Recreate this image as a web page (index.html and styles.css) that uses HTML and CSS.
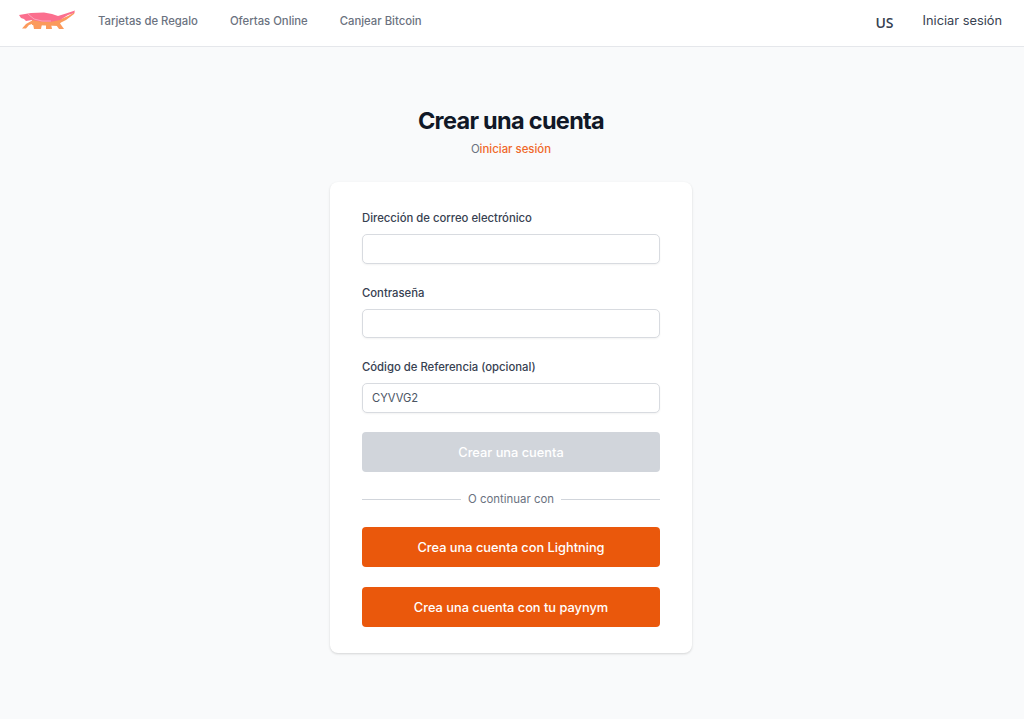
FILE: index.html
```html
<!DOCTYPE html>
<html lang="es">

<head>
    <meta charset="UTF-8">
    <meta name="viewport" content="width=device-width, initial-scale=1.0">
    <title>Crear una cuenta</title>
    <link rel="stylesheet" href="styles.css">
</head>

<body>
    <header class="topbar">
        <a class="logo" href="#">
            <svg width="58" height="22" viewBox="0 0 58 22">
                <path fill="#fb9a5c" d="M4 18.500L8 14L15 10L17 13L11 15L8 18.500Z"/>
                <path fill="#fb9a5c" d="M14 10L44 9L41 16L14 15Z"/>
                <path fill="#fb9a5c" d="M15 14L24 14L23 19L16 19Z"/>
                <path fill="#fb9a5c" d="M28 14L33 14L34 19L28 19Z"/>
                <path fill="#fb9a5c" d="M36 12L41 12L46 19L41 19Z"/>
                <path fill="#fb9a5c" d="M36 12L50 6L57 2L56 4L48 10L40 14Z"/>
                <path fill="#fb6f8e" d="M1 5L7 4L13 3L26 2.500L34 4L40 6L48 3.500L57 .5L56 3L50 5L42 10L32 12L22 11.500L14 10L8 11L6 9L3 8Z"/>
                <path fill="none" stroke="#fdb4c4" stroke-width=".8" d="M10 4L16 9L24 11L33 11"/>
            </svg>
        </a>
        <nav class="nav">
            <a href="#">Tarjetas de Regalo</a>
            <a href="#">Ofertas Online</a>
            <a href="#">Canjear Bitcoin</a>
        </nav>
        <div class="topbar-right">
            <span class="lang">US</span>
            <a class="login" href="#">Iniciar sesión</a>
        </div>
    </header>

    <main class="page">
        <h1>Crear una cuenta</h1>
        <p class="sub">O<a href="#">iniciar sesión</a></p>

        <form class="card" action="#">
            <div class="field">
                <label for="email">Dirección de correo electrónico</label>
                <input type="email" id="email">
            </div>
            <div class="field">
                <label for="pw">Contraseña</label>
                <input type="password" id="pw">
            </div>
            <div class="field field-last">
                <label for="ref">Código de Referencia (opcional)</label>
                <input type="text" id="ref" value="CYVVG2">
            </div>
            <button class="btn btn-off" type="button">Crear una cuenta</button>
            <div class="divider"><span>O continuar con</span></div>
            <button class="btn" type="button">Crea una cuenta con Lightning</button>
            <button class="btn" type="button">Crea una cuenta con tu paynym</button>
        </form>
    </main>
</body>

</html>
```

FILE: styles.css
```css
* {
    padding: 0;
    margin: 0;
    box-sizing: border-box;
}

body {
    background-color: #f9fafb;
    font-family: Inter, "Liberation Sans", sans-serif;
    color: #111827;
    height: 719px;
    overflow: hidden;
}

a {
    text-decoration: none;
    color: inherit;
}

.topbar {
    display: flex;
    align-items: center;
    height: 47px;
    padding: 0 22px 4px 18px;
    background-color: white;
    border-bottom: 1px solid #e5e7eb;
}

.logo {
    display: flex;
    width: 58px;
}

.nav {
    display: flex;
    gap: 32px;
    margin-left: 22px;
    font-size: 11.3px;
    font-weight: 500;
    color: #6b7280;
}

.topbar-right {
    display: flex;
    align-items: center;
    margin-left: auto;
}

.lang {
    font-family: "Open Sans", sans-serif;
    font-size: 14px;
    font-weight: 600;
    color: #374151;
    margin-top: 2px;
}

.login {
    margin-left: 29px;
    margin-bottom: 1px;
    font-size: 12.8px;
    color: #374151;
}

.page {
    display: flex;
    flex-direction: column;
    align-items: center;
    padding-top: 59px;
    padding-right: 2px;
}

h1 {
    font-size: 23.5px;
    line-height: 30px;
    font-weight: 700;
    letter-spacing: -0.7px;
}

.sub {
    margin-top: 5px;
    font-size: 11.4px;
    line-height: 16px;
    color: #6b7280;
}

.sub a {
    color: #f0682a;
    font-weight: 500;
}

.card {
    width: 362px;
    height: 471px;
    margin-top: 25px;
    padding: 29px 32px 0;
    background-color: white;
    border-radius: 8px;
    box-shadow: 0 1px 3px rgba(0, 0, 0, .1), 0 1px 2px rgba(0, 0, 0, .06);
}

.field {
    margin-bottom: 22px;
}

.field-last {
    margin-bottom: 19.5px;
}

.field label {
    display: block;
    margin-bottom: 8px;
    font-size: 11.3px;
    line-height: 15px;
    font-weight: 500;
    color: #374151;
}

.field input {
    display: block;
    width: 100%;
    height: 29.5px;
    padding: 0 9px;
    border: 1px solid #d8dbe0;
    border-radius: 5px;
    font-family: inherit;
    font-size: 11.2px;
    color: #4b5563;
    box-shadow: 0 1px 2px rgba(0, 0, 0, .05);
}

.btn {
    display: block;
    width: 100%;
    height: 40px;
    margin-bottom: 20px;
    border: none;
    border-radius: 4px;
    background-color: #ea580c;
    color: white;
    font-family: inherit;
    font-size: 12.8px;
    font-weight: 500;
}

.btn-off {
    margin-bottom: 19px;
    background-color: #d1d5db;
}

.divider {
    display: flex;
    align-items: center;
    gap: 7px;
    margin-bottom: 20px;
    font-size: 11.4px;
    line-height: 16px;
    color: #6b7280;
}

.divider::before,
.divider::after {
    content: "";
    flex: 1;
    border-top: 1px solid #d1d5db;
}
```
